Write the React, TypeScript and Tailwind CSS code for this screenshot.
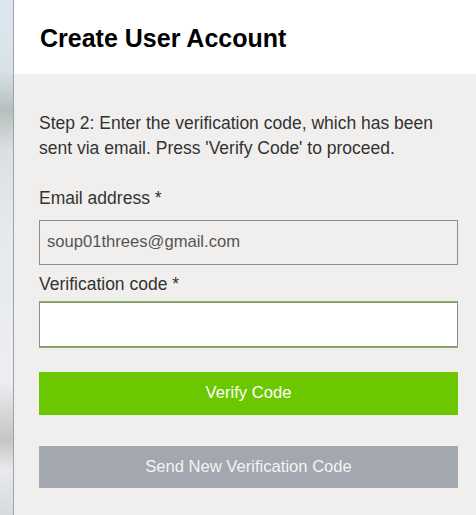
import React from "react";

export default function App() {
  return (
    <div className="flex w-[476px] h-[515px] overflow-hidden" style={{ fontFamily: '"Liberation Sans", Arial, sans-serif' }}>
      <div className="w-[13px] shrink-0 bg-[linear-gradient(to_bottom,#dde7f0_0px,#d8e2e8_70px,#b7bfbd_110px,#d9dfe2_150px,#e6e9ec_220px,#eceef0_380px,#c4c6c4_440px,#e8eaec_470px,#d5dadf_515px)]" />
      <div className="w-px shrink-0 bg-[#9da1b0]" />
      <div className="flex-1 flex flex-col bg-[#f0efed]">
        <div className="h-[74px] bg-white flex items-center pl-[26px] pt-[2px]">
          <h1 className="text-[25px] font-bold text-black leading-none">Create User Account</h1>
        </div>
        <div className="pl-[25px] pr-[18px] pt-[37px] flex flex-col">
          <p className="text-[17.5px] leading-[25px] text-[#333]">
            Step 2: Enter the verification code, which has been sent via email. Press 'Verify Code' to proceed.
          </p>
          <label className="mt-[27px] text-[17.5px] leading-[20px] text-[#333]">Email address *</label>
          <div className="mt-[12px] h-[45px] border border-[#8c8c8c] flex items-center px-[7px] text-[16.6px] text-[#555]">
            soup01threes@gmail.com
          </div>
          <label className="mt-[9px] text-[17.5px] leading-[20px] text-[#333]">Verification code *</label>
          <div className="mt-[7px] border-y border-[#7cc242]">
            <div className="h-[45px] bg-white border border-[#8c8c8c]" />
          </div>
          <button className="mt-[24px] h-[43px] bg-[#6bc800] text-white text-[16.6px]">Verify Code</button>
          <button className="mt-[31px] h-[42px] bg-[#a3a7af] text-[#f4f4f4] text-[16.6px]">Send New Verification Code</button>
        </div>
      </div>
    </div>
  );
}
